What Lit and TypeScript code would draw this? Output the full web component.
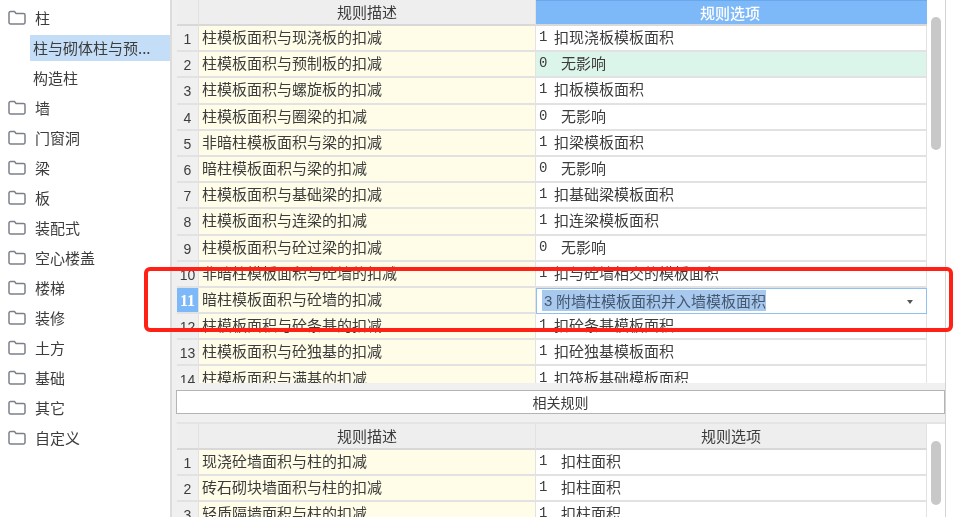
import { LitElement, html, css, svg } from "lit";
import { customElement } from "lit/decorators.js";
import { classMap } from "lit/directives/class-map.js";

const folder = svg`<svg class="folder" width="18" height="15" viewBox="0 0 18 15" fill="none"><path d="M1 12.5V3a1.5 1.5 0 0 1 1.5-1.5H6.5L8 3.5H15.5A1.5 1.5 0 0 1 17 5V12.5A1.5 1.5 0 0 1 15.5 14H2.5A1.5 1.5 0 0 1 1 12.5Z" stroke="#7b8089" stroke-width="1.5"/></svg>`;

const topRows: [string, string, string][] = [
  ["柱模板面积与现浇板的扣减", "1", "扣现浇板模板面积"],
  ["柱模板面积与预制板的扣减", "0", "无影响"],
  ["柱模板面积与螺旋板的扣减", "1", "扣板模板面积"],
  ["柱模板面积与圈梁的扣减", "0", "无影响"],
  ["非暗柱模板面积与梁的扣减", "1", "扣梁模板面积"],
  ["暗柱模板面积与梁的扣减", "0", "无影响"],
  ["柱模板面积与基础梁的扣减", "1", "扣基础梁模板面积"],
  ["柱模板面积与连梁的扣减", "1", "扣连梁模板面积"],
  ["柱模板面积与砼过梁的扣减", "0", "无影响"],
  ["非暗柱模板面积与砼墙的扣减", "1", "扣与砼墙相交的模板面积"],
  ["暗柱模板面积与砼墙的扣减", "3", "附墙柱模板面积并入墙模板面积"],
  ["柱模板面积与砼条基的扣减", "1", "扣砼条基模板面积"],
  ["柱模板面积与砼独基的扣减", "1", "扣砼独基模板面积"],
  ["柱模板面积与满基的扣减", "1", "扣筏板基础模板面积"],
];

const bottomRows: [string, string, string][] = [
  ["现浇砼墙面积与柱的扣减", "1", "扣柱面积"],
  ["砖石砌块墙面积与柱的扣减", "1", "扣柱面积"],
  ["轻质隔墙面积与柱的扣减", "1", "扣柱面积"],
];

const tree = ["墙", "门窗洞", "梁", "板", "装配式", "空心楼盖", "楼梯", "装修", "土方", "基础", "其它", "自定义"];

@customElement("app-root")
export class AppRoot extends LitElement {
  static styles = css`
    :host {
      display: flex;
      width: 957px;
      height: 517px;
      overflow: hidden;
      position: relative;
      background: #fff;
      color: #3c3c3c;
      font-family: "Noto Sans CJK SC", "Liberation Sans", sans-serif;
      font-size: 15px;
      filter: blur(0.35px);
    }
    .side { width: 170px; flex: none; padding-top: 2px; box-sizing: border-box; }
    .node { height: 30px; display: flex; align-items: center; padding-left: 8px; gap: 10px; }
    .node span { margin-left: -1px; }
    .folder { flex: none; }
    .sub { height: 26px; margin: 0 0 1px 30px; display: flex; align-items: center; padding: 0 0 2px 3px; box-sizing: border-box; white-space: nowrap; }
    .sub.sel { background: #c5def8; margin-top: 3px; margin-bottom: 4px; }
    .split { width: 2px; flex: none; background: #dcdcdc; }
    .gutter { width: 4px; flex: none; background: #f0f0f0; }
    .main { width: 769px; flex: none; display: flex; flex-direction: column; background: #f0f0f0; }
    .edge { width: 1px; flex: none; background: #d4d4d4; }
    .pane { display: flex; background: #fff; overflow: hidden; border-left: 1px solid #f0f0f0; }
    .pane.top { height: 383px; }
    .pane.bottom { flex: 1; border-top: 2px solid #e4e4e4; margin-top: 8px; }
    .table { width: 750px; flex: none; }
    .track { flex: 1; padding: 17px 4px 0; }
    .thumb { width: 10px; border-radius: 5px; background: #c8c8c8; }
    .thumb.a { height: 133px; }
    .thumb.b { height: 64px; }
    .row { display: grid; grid-template-columns: 22px 337px 391px; height: 26.2px; }
    .row > div { box-sizing: border-box; border-bottom: 2px solid #e2e2e2; border-right: 1px solid #e2e2e2; display: flex; align-items: center; white-space: nowrap; overflow: hidden; line-height: 20px; }
    .row.head { height: 26px; }
    .row.lower { height: 26px; }
    .head > div { background: #eeeeee; justify-content: center; border-bottom-color: #d8d8d8; }
    .head .active { background: #7db8f8; color: #fff; border-top: 1px solid #6aa8ee; border-right: none; font-weight: 500; padding-right: 3px; }
    .num { background: #f0f0f0; justify-content: center; font-family: "Liberation Sans", sans-serif; font-size: 14px; padding-top: 2px; }
    .num.cur { background: #7db8f8; color: #fff; font: bold 16px "Liberation Serif", serif; }
    .desc { background: #fffde8; padding-left: 3px; padding-bottom: 2px; }
    .opt { background: #fff; padding-left: 3px; padding-bottom: 2px; position: relative; }
    .opt.tint { background: #dcf5ea; }
    .row > .opt.edit { border: 1px solid #90c0f0; padding: 0 0 0 5px; }
    .code { font-family: "Liberation Mono", monospace; font-size: 14px; width: 15px; flex: none; }
    .zero .code, .lower .code { width: 22px; }
    .value { display: inline-flex; height: 21px; align-items: center; background: #a9c8ee; color: #44586f; }
    .value .code { width: 14px; box-sizing: border-box; padding-left: 2px; font-family: "Liberation Sans", sans-serif; font-size: 15px; }
    .caret { position: absolute; right: 13px; top: 11px; width: 0; height: 0; border: 3px solid transparent; border-top: 4px solid #555; border-bottom: none; }
    .btn { height: 24px; margin-top: 7px; box-sizing: border-box; background: #fff; border: 1px solid #b4b4b4; width: 769px; display: flex; align-items: center; justify-content: center; font-size: 14px; }
    .mark { position: absolute; left: 144px; top: 267px; width: 809px; height: 65px; box-sizing: border-box; border: 4px solid #ff2116; border-radius: 6px; pointer-events: none; }
  `;

  private row(i: number, r: [string, string, string], lower: boolean) {
    const [desc, code, text] = r;
    const edit = !lower && i === 11;
    return html`<div class=${classMap({ row: true, lower })}>
      <div class=${classMap({ num: true, cur: edit })}>${i}</div>
      <div class="desc">${desc}</div>
      <div class=${classMap({ opt: true, edit, tint: !lower && i === 2, zero: code === "0" })}>
        ${edit
          ? html`<span class="value"><span class="code">${code}</span>${text}</span><span class="caret"></span>`
          : html`<span class="code">${code}</span>${text}`}
      </div>
    </div>`;
  }

  render() {
    return html`
      <div class="side">
        <div class="node">${folder}<span>柱</span></div>
        <div class="sub sel">柱与砌体柱与预...</div>
        <div class="sub">构造柱</div>
        ${tree.map((t) => html`<div class="node">${folder}<span>${t}</span></div>`)}
      </div>
      <div class="split"></div>
      <div class="gutter"></div>
      <div class="main">
        <div class="pane top">
          <div class="table">
            <div class="row head"><div></div><div>规则描述</div><div class="active">规则选项</div></div>
            ${topRows.map((r, i) => this.row(i + 1, r, false))}
          </div>
          <div class="track"><div class="thumb a"></div></div>
        </div>
        <div class="btn">相关规则</div>
        <div class="pane bottom">
          <div class="table">
            <div class="row head"><div></div><div>规则描述</div><div>规则选项</div></div>
            ${bottomRows.map((r, i) => this.row(i + 1, r, true))}
          </div>
          <div class="track"><div class="thumb b"></div></div>
        </div>
      </div>
      <div class="edge"></div>
      <div class="mark"></div>
    `;
  }
}
